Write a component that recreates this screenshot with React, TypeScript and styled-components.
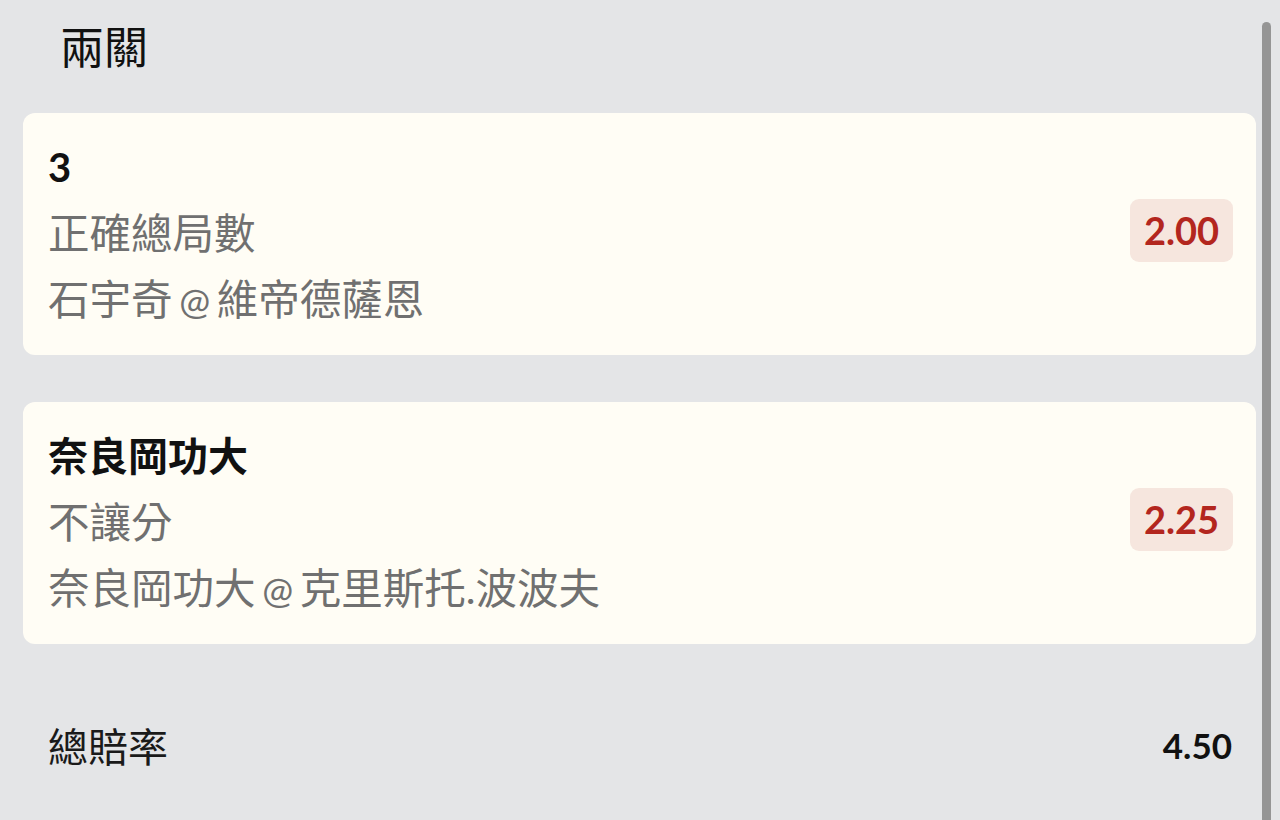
import React from "react";
import styled, { createGlobalStyle } from "styled-components";

const Global = createGlobalStyle`
  html, body { margin: 0; padding: 0; background: #e4e5e7; }
  body { font-family: "Lato", "Noto Sans CJK TC", sans-serif; }
`;

const Page = styled.div`
  position: relative;
  width: 1280px;
  height: 820px;
  overflow: hidden;
  background: #e4e5e7;
  box-sizing: border-box;
  padding: 0 24px 0 23px;
  display: flex;
  flex-direction: column;
`;

const Title = styled.h1`
  margin: 0;
  padding: 18px 0 0 37px;
  height: 113px;
  box-sizing: border-box;
  font-size: 44px;
  line-height: 58px;
  font-weight: 400;
  color: #111;
  font-family: "Lato", "Noto Sans CJK TC", sans-serif;
`;

const List = styled.div`
  display: flex;
  flex-direction: column;
  gap: 47px;
`;

const Card = styled.div`
  background: #fffdf5;
  border-radius: 12px;
  height: 242px;
  box-sizing: border-box;
  padding: 22px 23px 22px 25px;
  display: flex;
  align-items: center;
  justify-content: space-between;
`;

const Info = styled.div`
  display: flex;
  flex-direction: column;
`;

const Line = styled.div<{ $strong?: boolean }>`
  font-size: ${(p) => (p.$strong ? "40px" : "41.5px")};
  line-height: 66px;
  word-spacing: ${(p) => (p.$strong ? "0" : "-4px")};
  font-weight: ${(p) => (p.$strong ? 700 : 400)};
  color: ${(p) => (p.$strong ? "#111" : "#707070")};
  white-space: nowrap;
`;

const At = styled.span`
  font-size: 37px;
`;

const Odds = styled.div`
  background: #f6e6de;
  color: #b3261e;
  border-radius: 9px;
  width: 103px;
  height: 63px;
  margin-top: -8px;
  display: flex;
  align-items: center;
  justify-content: center;
  font-size: 38px;
  font-weight: 700;
  font-family: "Lato", sans-serif;
`;

const Summary = styled.div`
  display: flex;
  align-items: center;
  justify-content: space-between;
  padding: 0 24px 0 25px;
  margin-top: 76px;
  height: 50px;
`;

const SummaryLabel = styled.div`
  font-size: 40px;
  color: #1a1a1a;
`;

const SummaryValue = styled.div`
  font-size: 35px;
  font-weight: 700;
  color: #111;
`;

const ScrollThumb = styled.div`
  position: absolute;
  top: 22px;
  bottom: -10px;
  left: 1262px;
  width: 9px;
  border-radius: 5px;
  background: #959595;
`;

const bets = [
  { pick: "3", market: "正確總局數", home: "石宇奇", away: "維帝德薩恩", odds: "2.00" },
  { pick: "奈良岡功大", market: "不讓分", home: "奈良岡功大", away: "克里斯托.波波夫", odds: "2.25" },
];

export default function App() {
  return (
    <>
      <Global />
      <Page>
        <Title>兩關</Title>
        <List>
          {bets.map((b) => (
            <Card key={b.pick}>
              <Info>
                <Line $strong>{b.pick}</Line>
                <Line>{b.market}</Line>
                <Line>
                  {b.home} <At>@</At> {b.away}
                </Line>
              </Info>
              <Odds>{b.odds}</Odds>
            </Card>
          ))}
        </List>
        <Summary>
          <SummaryLabel>總賠率</SummaryLabel>
          <SummaryValue>4.50</SummaryValue>
        </Summary>
        <ScrollThumb />
      </Page>
    </>
  );
}
